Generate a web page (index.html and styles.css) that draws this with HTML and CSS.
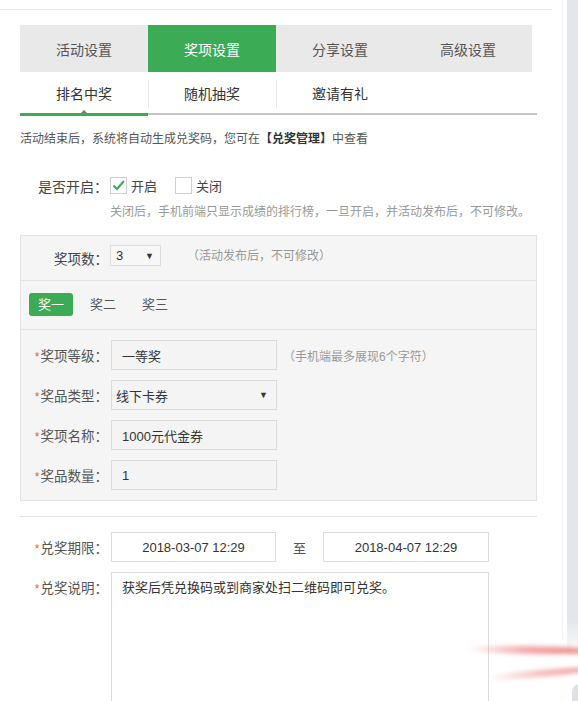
FILE: index.html
```html
<!DOCTYPE html>
<html lang="zh-CN">
<head>
<meta charset="utf-8">
<title>奖项设置</title>
<link rel="stylesheet" href="styles.css">
</head>
<body>
<div class="page">
  <div class="main">
    <div class="topline"></div>
    <div class="content">
      <div class="tabs">
        <div class="tab">活动设置</div>
        <div class="tab active">奖项设置</div>
        <div class="tab">分享设置</div>
        <div class="tab">高级设置</div>
      </div>
      <div class="subtabs">
        <div class="subtab current">排名中奖<span class="caret"></span></div>
        <div class="subtab">随机抽奖</div>
        <div class="subtab">邀请有礼</div>
      </div>
      <p class="info">活动结束后，系统将自动生成兑奖码，您可在<b>【兑奖管理】</b>中查看</p>
      <div class="toggle-row">
        <span class="toggle-label">是否开启：</span>
        <span class="check on"><svg width="15" height="15" viewBox="0 0 15 15"><polyline points="2.5,7.5 6,11 13,3" fill="none" stroke="#3bab55" stroke-width="2"/></svg></span>
        <span class="check-text">开启</span>
        <span class="check"></span>
        <span class="check-text">关闭</span>
      </div>
      <p class="toggle-hint">关闭后，手机前端只显示成绩的排行榜，一旦开启，并活动发布后，不可修改。</p>
      <div class="panel">
        <div class="count-row">
          <span class="count-label">奖项数：</span>
          <span class="mini-select">3<span class="arrow">▼</span></span>
          <span class="hint count-hint">（活动发布后，不可修改）</span>
        </div>
        <div class="prize-tabs">
          <span class="prize-btn active">奖一</span>
          <span class="prize-btn">奖二</span>
          <span class="prize-btn">奖三</span>
        </div>
        <div class="panel-form">
          <div class="field">
            <span class="label"><i>*</i>奖项等级：</span>
            <span class="input">一等奖</span>
            <span class="hint field-hint">（手机端最多展现6个字符）</span>
          </div>
          <div class="field">
            <span class="label"><i>*</i>奖品类型：</span>
            <span class="input select">线下卡券<span class="arrow">▼</span></span>
          </div>
          <div class="field">
            <span class="label"><i>*</i>奖项名称：</span>
            <span class="input">1000元代金券</span>
          </div>
          <div class="field">
            <span class="label"><i>*</i>奖品数量：</span>
            <span class="input">1</span>
          </div>
        </div>
      </div>
      <div class="sep"></div>
      <div class="field date-field">
        <span class="label"><i>*</i>兑奖期限：</span>
        <span class="date-input">2018-03-07 12:29</span>
        <span class="to">至</span>
        <span class="date-input">2018-04-07 12:29</span>
      </div>
      <div class="field desc-field">
        <span class="label"><i>*</i>兑奖说明：</span>
        <div class="textarea">获奖后凭兑换码或到商家处扫二维码即可兑奖。</div>
      </div>
    </div>
  </div>
  <div class="scrollbar"></div>
  <div class="streak s1"></div>
  <div class="streak s2"></div>
  <div class="corner"></div>
</div>
</body>
</html>
```

FILE: styles.css
```css
* { box-sizing: border-box; }
html, body { margin: 0; padding: 0; background: #fff; }
body {
  font-family: "Liberation Sans", "Noto Sans CJK SC", sans-serif;
  color: #444;
}
.page {
  position: relative;
  width: 578px;
  height: 701px;
  overflow: hidden;
  display: flex;
}
.main {
  width: 563px;
  height: 640px;
  border-right: 1px solid #f0f0f0;
  flex: none;
}
.topline {
  width: 552px;
  height: 10px;
  border-bottom: 1px solid #e6e6e6;
}
.content {
  padding-left: 20px;
  width: 537px;
}
.tabs {
  margin-top: 15px;
  display: flex;
  width: 512px;
  height: 47px;
}
.tab {
  width: 128px;
  display: flex;
  align-items: center;
  justify-content: center;
  background: #e9e9e9;
  font-size: 14px;
  color: #555;
}
.tab.active { background: #3bab55; color: #fff; }

.subtabs {
  position: relative;
  display: flex;
  width: 517px;
  height: 43px;
  border-bottom: 2px solid #c4c4c4;
}
.subtabs::after {
  content: "";
  position: absolute;
  left: 0;
  bottom: -3px;
  width: 128px;
  height: 3px;
  background: #3bab55;
}
.subtab {
  position: relative;
  width: 128px;
  display: flex;
  align-items: center;
  justify-content: center;
  font-size: 14px;
  color: #333;
}
.subtab + .subtab::before {
  content: "";
  position: absolute;
  left: 0;
  top: 8px;
  height: 28px;
  width: 1px;
  background: #e8e8e8;
}
.caret {
  position: absolute;
  left: 61px;
  bottom: 0;
  border: 3px solid transparent;
  border-bottom-color: #777;
  border-top: 0;
}

.info {
  margin: 14px 0 0;
  font-size: 12px;
  line-height: 20px;
  color: #555;
}
.info b { color: #333; }

.toggle-row {
  margin-top: 26px;
  display: flex;
  align-items: center;
  height: 20px;
}
.toggle-label {
  width: 88px;
  text-align: right;
  font-size: 14px;
  color: #444;
  margin-right: 2px;
  padding-top: 2px;
}
.check {
  width: 17px;
  height: 17px;
  border: 1px solid #d0d0d0;
  background: #fff;
  display: flex;
  align-items: center;
  justify-content: center;
}
.check-text {
  font-size: 13px;
  color: #444;
  margin-left: 4px;
  margin-right: 18px;
}
.toggle-hint {
  margin: 8px 0 0 90px;
  font-size: 12px;
  line-height: 18px;
  color: #999;
}

.panel {
  margin-top: 14px;
  width: 517px;
  border: 1px solid #e2e2e2;
  background: #f5f5f5;
}
.count-row {
  height: 45px;
  display: flex;
  align-items: flex-start;
  padding-top: 9px;
  border-bottom: 1px solid #e2e2e2;
}
.count-label {
  width: 87px;
  text-align: right;
  font-size: 13.5px;
  line-height: 20px;
  padding-top: 5px;
  color: #444;
}
.mini-select {
  margin-left: 2px;
  width: 51px;
  height: 21px;
  border: 1px solid #dcdcdc;
  background: #f7f7f7;
  display: flex;
  align-items: center;
  justify-content: space-between;
  padding: 0 6px 0 5px;
  font-size: 13px;
  color: #333;
}
.arrow { font-size: 9px; color: #333; }
.hint { font-size: 12px; color: #999; }
.count-hint { margin-left: 26px; line-height: 20px; padding-top: 1px; }

.prize-tabs {
  height: 49px;
  display: flex;
  align-items: flex-start;
  padding: 12px 0 0 8px;
  border-bottom: 1px solid #e2e2e2;
}
.prize-btn {
  height: 23px;
  line-height: 23px;
  font-size: 13px;
  color: #555;
  margin-right: 26px;
}
.prize-btn.active {
  width: 44px;
  text-align: center;
  background: #3bab55;
  color: #fff;
  border-radius: 3px;
  margin-right: 17px;
}

.panel-form {
  padding: 10px 0 10px;
  display: flex;
  flex-direction: column;
  gap: 10px;
}
.field {
  display: flex;
  align-items: center;
  height: 30px;
}
.label {
  width: 87px;
  text-align: right;
  font-size: 13.5px;
  color: #555;
  flex: none;
}
.label i { font-style: normal; color: #e0605a; font-size: 12px; margin-right: 1px; }
.input {
  margin-left: 3px;
  width: 166px;
  height: 30px;
  border: 1px solid #dcdcdc;
  background: #f4f4f4;
  display: flex;
  align-items: center;
  padding-left: 10px;
  font-size: 13px;
  color: #333;
}
.input.select {
  padding: 0 8px 0 4px;
  justify-content: space-between;
}
.field-hint { margin-left: 6px; }

.sep {
  margin-top: 15px;
  width: 517px;
  border-top: 1px solid #e0e0e0;
}
.date-field { margin-top: 15px; }
.date-field .label, .desc-field .label { width: 88px; }
.date-field .label { padding-left: 1px; }
.date-input {
  margin-left: 3px;
  width: 165px;
  height: 30px;
  border: 1px solid #dcdcdc;
  background: #fff;
  display: flex;
  align-items: center;
  justify-content: center;
  font-size: 13px;
  color: #333;
}
.date-input + .to + .date-input { margin-left: 0; width: 166px; }
.to {
  width: 47px;
  text-align: center;
  font-size: 13px;
  color: #555;
}
.desc-field {
  margin-top: 10px;
  align-items: flex-start;
  height: auto;
}
.desc-field .label { padding-top: 5px; }
.textarea {
  margin-left: 3px;
  width: 378px;
  height: 150px;
  border: 1px solid #dcdcdc;
  background: #fff;
  padding: 5px 10px;
  font-size: 13px;
  line-height: 20px;
  color: #333;
}

.scrollbar {
  margin-left: 4px;
  width: 11px;
  height: 701px;
  flex: none;
  background: linear-gradient(to bottom, #e3e6ea 0, #e3e6ea 620px, #fff 660px, #fff 100%);
}
.streak {
  position: absolute;
  border-radius: 50%;
  filter: blur(2px);
}
.s1 {
  left: 465px;
  top: 646px;
  width: 130px;
  height: 8px;
  background: linear-gradient(to right, rgba(240,170,170,0), rgba(238,140,140,0.7) 45%, rgba(232,110,110,0.85));
  transform: rotate(1deg);
}
.s2 {
  left: 485px;
  top: 670px;
  width: 110px;
  height: 7px;
  background: linear-gradient(to right, rgba(240,170,170,0), rgba(238,150,150,0.6) 50%, rgba(232,120,120,0.75));
  transform: rotate(-5deg);
}
.corner {
  position: absolute;
  left: 572px;
  top: 684px;
  width: 14px;
  height: 24px;
  border-radius: 8px 0 0 0;
  background: #dde0e4;
}
```
